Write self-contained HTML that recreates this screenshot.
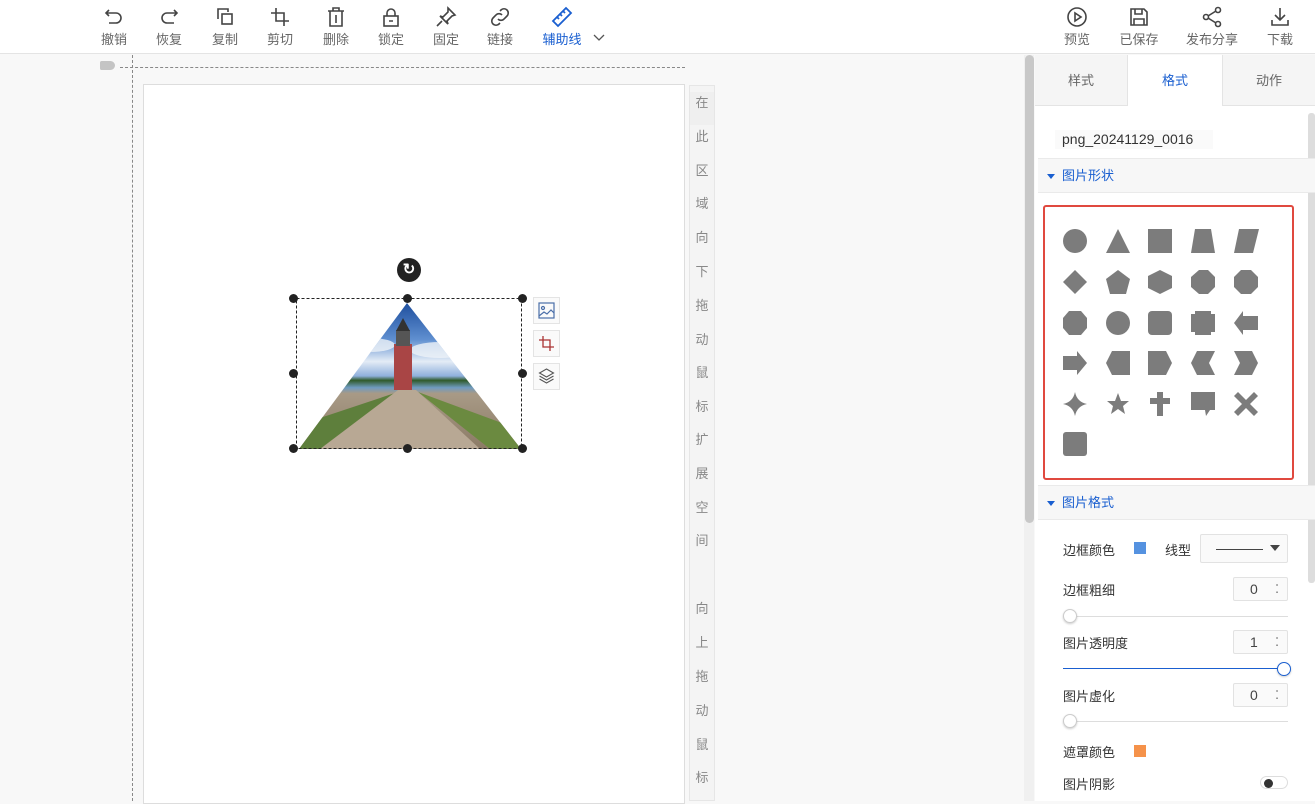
<!DOCTYPE html>
<html><head><meta charset="utf-8"><style>
*{margin:0;padding:0;box-sizing:border-box}
body{width:1315px;height:801px;overflow:hidden;background:#f8f8f8;font-family:"Liberation Sans","Noto Sans CJK SC",sans-serif;position:relative;color:#333}
.top{position:absolute;left:0;top:0;width:1315px;height:54px;background:#fff;border-bottom:1px solid #e4e4e4}
.tb{position:absolute;top:6px;width:50px;margin-left:-25px;text-align:center;font-size:13px;color:#666}
.tb svg{display:block;margin:0 auto 3px;width:22px;height:22px}
.tb span{display:block;line-height:18px}
.abs{position:absolute}
.vt{position:absolute;left:689px;top:85px;width:26px;height:716px;background:#f4f4f4;border:1px solid #e6e6e6;font-size:13px;color:#888;text-align:center}
.vt div{position:absolute;left:0;width:24px}
.panel{position:absolute;left:1035px;top:55px;width:280px;height:746px;background:#fff}
.tab{position:absolute;top:0;height:51px;line-height:51px;text-align:center;font-size:13px;color:#666;background:#f5f5f5;border-bottom:1px solid #e4e4e4}
.sec{position:absolute;left:3px;width:277px;height:35px;background:#f7f7f7;border-top:1px solid #eaeaea;border-bottom:1px solid #eaeaea;color:#1a5fd0;font-size:13px;line-height:33px;padding-left:24px}
.sec:before{content:"";position:absolute;left:9px;top:15px;border-left:4px solid transparent;border-right:4px solid transparent;border-top:5px solid #1a5fd0}
.lbl{position:absolute;font-size:13px;color:#333}
.num{position:absolute;left:1233px;width:55px;height:24px;border:1px solid #e2e2e2;border-radius:2px;background:#fafafa;font-size:14px;line-height:22px;padding-left:16px;color:#444}
.num:after{content:"⁚";position:absolute;right:8px;top:0;font-size:12px;color:#666}
.track{position:absolute;left:1063px;width:225px;height:1px;background:#ddd}
.knob{position:absolute;width:14px;height:14px;border-radius:50%;background:#fff;border:1px solid #ccc;box-shadow:0 1px 2px rgba(0,0,0,.2)}
.h{position:absolute;width:9px;height:9px;border-radius:50%;background:#222}
.side{position:absolute;left:533px;width:27px;height:27px;border:1px solid #e4e4e4;background:#fafafa}
</style></head><body>
<div class="top">
<div class="tb" style="left:114px"><svg viewBox="0 0 22 22" fill="none" stroke="#444" stroke-width="1.6"><path d="M6 4L3 7l3 3M3 7h10a5 5 0 010 10H6"/></svg><span>撤销</span></div>
<div class="tb" style="left:169px"><svg viewBox="0 0 22 22" fill="none" stroke="#444" stroke-width="1.6"><path d="M16 4l3 3-3 3M19 7H9a5 5 0 000 10h7"/></svg><span>恢复</span></div>
<div class="tb" style="left:225px"><svg viewBox="0 0 22 22" fill="none" stroke="#444" stroke-width="1.6"><path d="M4 13V3h10v3"/><rect x="8" y="8" width="10" height="10"/></svg><span>复制</span></div>
<div class="tb" style="left:280px"><svg viewBox="0 0 22 22" fill="none" stroke="#444" stroke-width="1.6"><path d="M7 2v13h13M2 7h13v13"/></svg><span>剪切</span></div>
<div class="tb" style="left:336px"><svg viewBox="0 0 22 22" fill="none" stroke="#444" stroke-width="1.6"><path d="M3 5h16M8 5V2h6v3M5 5v15h12V5M11 9v8"/></svg><span>删除</span></div>
<div class="tb" style="left:391px"><svg viewBox="0 0 22 22" fill="none" stroke="#444" stroke-width="1.6"><rect x="4" y="10" width="14" height="10"/><path d="M7 10V7a4 4 0 018 0v3M9 15h4"/></svg><span>锁定</span></div>
<div class="tb" style="left:446px"><svg viewBox="0 0 22 22" fill="none" stroke="#444" stroke-width="1.6"><path d="M13 2l7 7-3 1-5 5 1 3-8-8 3 1 5-5zM7 15l-5 5"/></svg><span>固定</span></div>
<div class="tb" style="left:500px"><svg viewBox="0 0 22 22" fill="none" stroke="#444" stroke-width="1.6"><path d="M9 13a4 4 0 006 0l3-3a4 4 0 00-6-6l-1 1M13 9a4 4 0 00-6 0l-3 3a4 4 0 006 6l1-1"/></svg><span>链接</span></div>
<div class="tb" style="left:562px;color:#1a5fd0"><svg viewBox="0 0 22 22" fill="none" stroke="#1a5fd0" stroke-width="1.8"><path d="M2 15L15 2l5 5L7 20zM6 11l2 2M9 8l2 2M12 5l2 2"/></svg><span>辅助线</span></div>
<svg class="abs" style="left:593px;top:33px" width="12" height="10" viewBox="0 0 12 10"><path d="M1 2l5 5 5-5" fill="none" stroke="#555" stroke-width="1.3"/></svg>
<div class="tb" style="left:1077px"><svg viewBox="0 0 22 22" fill="none" stroke="#444" stroke-width="1.6"><circle cx="11" cy="11" r="9"/><path d="M9 7v8l6-4z"/></svg><span>预览</span></div>
<div class="tb" style="left:1139px"><svg viewBox="0 0 22 22" fill="none" stroke="#444" stroke-width="1.6"><path d="M3 3h13l3 3v13H3zM7 3v5h7V3M6 19v-6h10v6"/></svg><span>已保存</span></div>
<div class="tb" style="left:1212px;width:70px;margin-left:-35px"><svg viewBox="0 0 22 22" fill="none" stroke="#444" stroke-width="1.6"><circle cx="17" cy="4" r="2.5"/><circle cx="5" cy="11" r="2.5"/><circle cx="17" cy="18" r="2.5"/><path d="M7 10l8-5M7 12l8 5"/></svg><span>发布分享</span></div>
<div class="tb" style="left:1280px"><svg viewBox="0 0 22 22" fill="none" stroke="#444" stroke-width="1.6"><path d="M11 2v12M6 9l5 5 5-5M3 14v5h16v-5"/></svg><span>下载</span></div>
</div>

<div class="abs" style="left:100px;top:61px;width:15px;height:9px;background:#c4c4c4;border-radius:2px 5px 5px 2px"></div>
<div class="abs" style="left:120px;top:67px;width:565px;border-top:1px dashed #888"></div>
<div class="abs" style="left:132px;top:55px;height:746px;border-left:1px dashed #888"></div>
<div class="abs" style="left:143px;top:84px;width:542px;height:720px;background:#fff;border:1px solid #ddd"></div>
<div class="vt">
<div style="top:6px;background:#efefef;height:33px;line-height:22px">在</div>
<div style="top:40px">此</div><div style="top:74px">区</div><div style="top:107px">域</div><div style="top:141px">向</div><div style="top:175px">下</div><div style="top:209px">拖</div><div style="top:243px">动</div><div style="top:276px">鼠</div><div style="top:310px">标</div><div style="top:343px">扩</div><div style="top:377px">展</div><div style="top:411px">空</div><div style="top:444px">间</div>
<div style="top:512px">向</div><div style="top:546px">上</div><div style="top:580px">拖</div><div style="top:614px">动</div><div style="top:648px">鼠</div><div style="top:681px">标</div>
</div>

<svg class="abs" style="left:290px;top:295px" width="240" height="160" viewBox="290 295 240 160">
<defs>
<linearGradient id="g" x1="0" y1="0" x2="0" y2="1">
<stop offset="0" stop-color="#1f4f9e"/><stop offset="0.25" stop-color="#5f8fd0"/><stop offset="0.4" stop-color="#e4ecf6"/><stop offset="0.5" stop-color="#8fb0dc"/><stop offset="0.53" stop-color="#2f5a2a"/><stop offset="0.58" stop-color="#6f9bc0"/><stop offset="0.62" stop-color="#a89a86"/><stop offset="1" stop-color="#8c7b66"/>
</linearGradient>
<clipPath id="c"><polygon points="407,303 299,449 521,449"/></clipPath>
</defs>
<polygon points="407,303 299,449 521,449" fill="url(#g)"/>
<g clip-path="url(#c)">
<ellipse cx="440" cy="350" rx="30" ry="8" fill="#eef2f8" opacity=".8"/>
<ellipse cx="370" cy="345" rx="25" ry="7" fill="#eef2f8" opacity=".8"/>
<polygon points="299,425 398,392 335,449 299,449" fill="#5e7f3c"/>
<polygon points="521,430 418,392 490,449 521,449" fill="#6b8a40"/>
<polygon points="398,390 416,390 480,449 320,449" fill="#b8a894"/>
<rect x="394" y="344" width="18" height="46" fill="#a94545"/>
<rect x="396" y="330" width="14" height="16" fill="#555"/>
<polygon points="403,318 396,331 410,331" fill="#333"/>
</g>
<rect x="296.5" y="298.5" width="225" height="150" fill="none" stroke="#222" stroke-dasharray="3,2"/>
<line x1="407" y1="280" x2="407" y2="298" stroke="#333" stroke-dasharray="1,1"/>
</svg>
<div class="abs" style="left:397px;top:258px;width:24px;height:24px;border-radius:50%;background:#222;color:#fff;font-size:15px;font-weight:bold;text-align:center;line-height:24px">↻</div>
<div class="h" style="left:289px;top:294px"></div><div class="h" style="left:403px;top:294px"></div><div class="h" style="left:518px;top:294px"></div>
<div class="h" style="left:289px;top:369px"></div><div class="h" style="left:518px;top:369px"></div>
<div class="h" style="left:289px;top:444px"></div><div class="h" style="left:403px;top:444px"></div><div class="h" style="left:518px;top:444px"></div>
<div class="side" style="top:297px"><svg width="25" height="25" viewBox="0 0 25 25" fill="none" stroke="#4a6ea8" stroke-width="1.2"><rect x="5" y="5" width="15" height="15"/><circle cx="9" cy="10" r="1.5"/><path d="M5 18l5-4 3 2 4-4 3 3"/></svg></div>
<div class="side" style="top:330px"><svg width="25" height="25" viewBox="0 0 25 25" fill="none" stroke="#a33" stroke-width="1.3"><path d="M9 5v11h11M5 9h11v11"/></svg></div>
<div class="side" style="top:363px"><svg width="25" height="25" viewBox="0 0 25 25" fill="none" stroke="#555" stroke-width="1.1"><path d="M12.5 5l7 4-7 4-7-4zM5.5 12l7 4 7-4M5.5 15l7 4 7-4"/></svg></div>

<div class="abs" style="left:1024px;top:55px;width:10px;height:746px;background:#f0f0f0"></div>
<div class="abs" style="left:1025px;top:55px;width:9px;height:468px;background:#c8c8c8;border-radius:5px"></div>

<div class="panel">
<div class="tab" style="left:0;width:93px;border-right:1px solid #e4e4e4">样式</div>
<div class="tab" style="left:93px;width:94px;background:#fff;color:#1a5fd0;border-bottom:none">格式</div>
<div class="tab" style="left:187px;width:93px;border-left:1px solid #e4e4e4">动作</div>
<div class="abs" style="left:20px;top:75px;width:158px;height:19px;background:#fafafa;font-size:14px;color:#333;line-height:19px;padding-left:7px">png_20241129_0016</div>
<div class="abs" style="left:273px;top:58px;width:7px;height:470px;background:#ddd;border-radius:3px"></div>
</div>
<div class="sec" style="left:1038px;top:158px">图片形状</div>
<div class="abs" style="left:1043px;top:205px;width:251px;height:275px;border:2px solid #e0493f;border-radius:3px;background:#fff"></div>
<svg class="abs" style="left:1050px;top:215px" width="240" height="250" viewBox="1050 215 240 250" fill="#7c7c7c">
<circle cx="1075" cy="241" r="12"/>
<polygon points="1118,229 1130,253 1106,253"/>
<rect x="1148" y="229" width="24" height="24"/>
<polygon points="1195,229 1211,229 1215,253 1191,253"/>
<polygon points="1239,229 1259,229 1253,253 1234,253"/>
<polygon points="1075,270 1087,282 1075,294 1063,282"/>
<polygon points="1118,270 1130,279 1126,294 1110,294 1106,279"/>
<polygon points="1160,270 1172,276 1172,288 1160,294 1148,288 1148,276"/>
<polygon points="1199,270 1208,270 1215,277 1215,287 1208,294 1199,294 1191,287 1191,277"/>
<polygon points="1241,270 1251,270 1258,277 1258,287 1251,294 1241,294 1234,287 1234,277"/>
<polygon points="1069,311 1081,311 1087,318 1087,328 1081,335 1069,335 1063,328 1063,318"/>
<ellipse cx="1118" cy="323" rx="12" ry="12"/>
<rect x="1148" y="311" width="24" height="24" rx="4"/>
<polygon points="1195,311 1211,311 1211,314 1215,314 1215,332 1211,332 1211,335 1195,335 1195,332 1191,332 1191,314 1195,314"/>
<polygon points="1234,323 1243,311 1243,316 1258,316 1258,330 1243,330 1243,335"/>
<polygon points="1063,356 1077,356 1077,351 1087,363 1077,375 1077,370 1063,370"/>
<polygon points="1112,351 1130,351 1130,375 1112,375 1106,363"/>
<polygon points="1148,351 1166,351 1172,363 1166,375 1148,375"/>
<polygon points="1197,351 1215,351 1209,363 1215,375 1197,375 1191,363"/>
<polygon points="1234,351 1252,351 1258,363 1252,375 1234,375 1240,363"/>
<path d="M1075 392 Q1077 402 1087 404 Q1077 406 1075 416 Q1073 406 1063 404 Q1073 402 1075 392z"/>
<polygon points="1118,393 1121,401 1129,401 1123,406 1125,414 1118,409 1111,414 1113,406 1107,401 1115,401"/>
<polygon points="1157,392 1163,392 1163,398 1170,398 1170,404 1163,404 1163,416 1157,416 1157,404 1150,404 1150,398 1157,398"/>
<polygon points="1191,392 1215,392 1215,410 1210,410 1206,416 1205,410 1191,410"/>
<polygon points="1238,392 1246,400 1254,392 1258,396 1250,404 1258,412 1254,416 1246,408 1238,416 1234,412 1242,404 1234,396"/>
<rect x="1063" y="432" width="24" height="24" rx="3"/>
</svg>
<div class="sec" style="left:1038px;top:485px">图片格式</div>
<div class="lbl" style="left:1063px;top:540px">边框颜色</div>
<div class="abs" style="left:1134px;top:542px;width:12px;height:12px;background:#5592e0"></div>
<div class="lbl" style="left:1165px;top:540px">线型</div>
<div class="abs" style="left:1200px;top:534px;width:88px;height:29px;border:1px solid #e2e2e2;border-radius:2px;background:#fafafa"><div class="abs" style="left:15px;top:14px;width:47px;border-top:1px solid #444"></div><div class="abs" style="left:69px;top:10px;border-left:5px solid transparent;border-right:5px solid transparent;border-top:6px solid #444"></div></div>
<div class="lbl" style="left:1063px;top:580px">边框粗细</div>
<div class="num" style="top:577px">0</div>
<div class="track" style="top:616px"></div><div class="knob" style="left:1063px;top:609px"></div>
<div class="lbl" style="left:1063px;top:633px">图片透明度</div>
<div class="num" style="top:630px">1</div>
<div class="track" style="top:668px;background:#1a5fd0"></div><div class="knob" style="left:1277px;top:662px;border:1.5px solid #1a5fd0"></div>
<div class="lbl" style="left:1063px;top:686px">图片虚化</div>
<div class="num" style="top:683px">0</div>
<div class="track" style="top:721px"></div><div class="knob" style="left:1063px;top:714px"></div>
<div class="lbl" style="left:1063px;top:742px">遮罩颜色</div>
<div class="abs" style="left:1134px;top:745px;width:12px;height:12px;background:#f5924a"></div>
<div class="lbl" style="left:1063px;top:774px">图片阴影</div>
<div class="abs" style="left:1260px;top:776px;width:28px;height:13px;border:1px solid #ddd;border-radius:7px;background:#fff"><div class="abs" style="left:3px;top:1.5px;width:9px;height:9px;border-radius:50%;background:#333"></div></div>
</body></html>
